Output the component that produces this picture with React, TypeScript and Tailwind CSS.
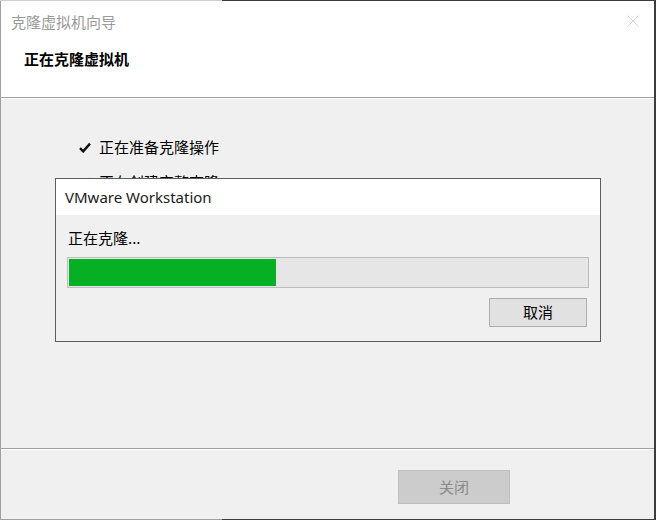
import React from "react"

const cjk = { fontFamily: '"Noto Sans CJK SC", "Noto Sans", sans-serif' }

function Check() {
  return (
    <svg width="12" height="11" viewBox="0 0 12 11" className="shrink-0">
      <path d="M1 6.2 L4.2 9.4 L11 1.6" fill="none" stroke="#111" strokeWidth="2.4" strokeLinejoin="miter" />
    </svg>
  )
}

function CloneProgressDialog() {
  const pct = 40
  return (
    <div className="absolute left-[55px] top-[178px] w-[546px] h-[164px] border border-[#5c5c5c] bg-[#f0f0f0] flex flex-col">
      <div className="h-[36px] bg-white flex items-center pl-[9px] text-[15px] text-[#1a1a1a]" style={{ fontFamily: '"Noto Sans", sans-serif' }}>
        VMware Workstation
      </div>
      <div className="flex flex-col px-[11px] pt-[13px]">
        <div className="text-[15px] leading-[20px] text-black pl-[1px]">正在克隆...</div>
        <div className="mt-[9px] h-[31px] border border-[#bcbcbc] bg-[#e6e6e6] p-px">
          <div className="h-full bg-[#06b025]" style={{ width: `${pct}%` }} />
        </div>
        <div className="flex justify-end mt-[10px] pr-[2px]">
          <button className="w-[98px] h-[29px] border border-[#adadad] bg-[#e1e1e1] text-[15px] text-black">取消</button>
        </div>
      </div>
    </div>
  )
}

export default function App() {
  const steps = ["正在准备克隆操作", "正在创建完整克隆"]
  return (
    <div className="relative w-[656px] h-[520px] overflow-hidden bg-[#f0f0f0] flex flex-col" style={cjk}>
      {/* top edge */}
      <div className="flex h-px shrink-0">
        <div className="w-[222px] bg-[#cfcfcf]" />
        <div className="flex-1 bg-[#3c3c3c]" />
      </div>
      <div className="flex flex-1 min-h-0">
        <div className="w-px bg-[#a0a0a0] shrink-0" />
        <div className="flex-1 flex flex-col min-w-0">
          {/* header */}
          <div className="h-[96px] bg-white shrink-0 flex flex-col">
            <div className="flex items-center justify-between h-[42px] pl-[10px] pr-[15px]">
              <span className="text-[15px] text-[#9a9a9a]">克隆虚拟机向导</span>
              <svg width="12" height="12" viewBox="0 0 12 12" className="-mt-[3px]">
                <path d="M0.5 0.5 L11.5 11.5 M11.5 0.5 L0.5 11.5" stroke="#d6d6d6" strokeWidth="1" />
              </svg>
            </div>
            <div className="pl-[23px] mt-[6px] text-[15px] font-bold text-black leading-[20px]">正在克隆虚拟机</div>
          </div>
          <div className="h-px bg-[#a0a0a0] shrink-0" />
          <div className="h-px bg-white shrink-0" />
          {/* body */}
          <div className="flex-1 flex flex-col gap-[15px] pl-[78px] pt-[38px]">
            {steps.map((s) => (
              <div key={s} className="flex items-center gap-[8px] h-[20px] text-[15px] text-black">
                <Check />
                <span>{s}</span>
              </div>
            ))}
          </div>
          <div className="h-px bg-[#a0a0a0] shrink-0" />
          <div className="h-px bg-white shrink-0" />
          {/* footer */}
          <div className="h-[69px] shrink-0 flex items-start justify-end pr-[144px] pt-[20px]">
            <button disabled className="w-[112px] h-[34px] border border-[#bfbfbf] bg-[#cccccc] text-[15px] text-[#8a8a8a]">关闭</button>
          </div>
        </div>
        <div className="w-[2px] bg-[#3c3c3c] shrink-0" />
      </div>
      <div className="flex h-px shrink-0">
        <div className="w-[222px] bg-[#a0a0a0]" />
        <div className="flex-1 bg-[#3c3c3c]" />
      </div>
      <CloneProgressDialog />
    </div>
  )
}
